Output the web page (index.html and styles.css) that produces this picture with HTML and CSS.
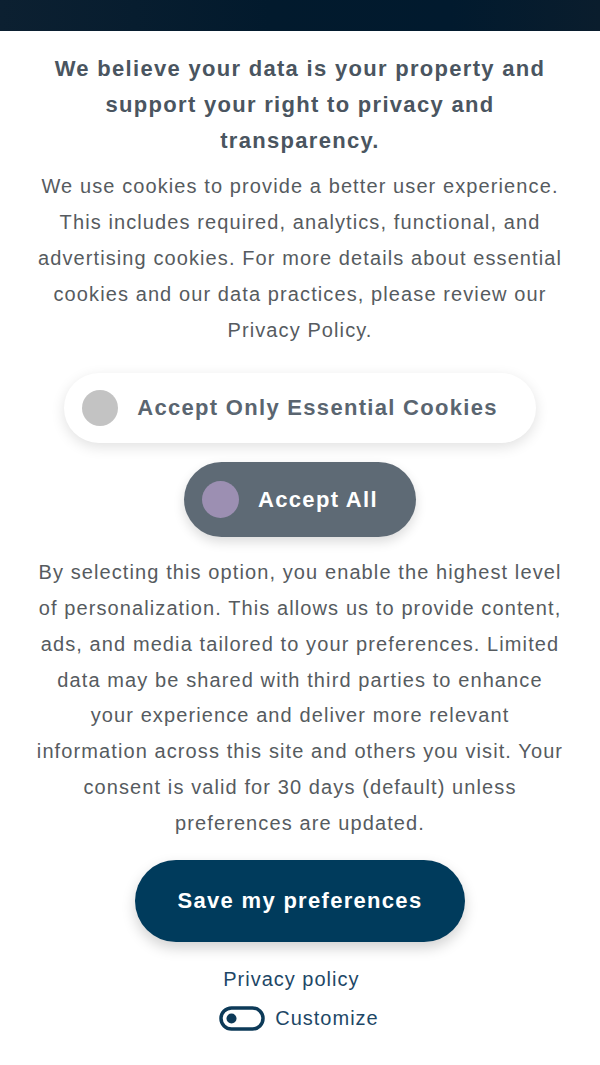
FILE: index.html
```html
<!DOCTYPE html>
<html lang="en">
<head>
<meta charset="utf-8">
<title>Cookie consent</title>
<link rel="stylesheet" href="styles.css">
</head>
<body>
<div class="topbar"></div>
<main class="consent">
  <h1 class="title">We believe your data is your property and support your right to privacy and transparency.</h1>
  <p class="text">We use cookies to provide a better user experience. This includes required, analytics, functional, and advertising cookies. For more details about essential cookies and our data practices, please review our Privacy Policy.</p>
  <div class="options">
    <button class="opt opt-light"><span class="dot dot-gray"></span><span>Accept Only Essential Cookies</span></button>
    <button class="opt opt-dark"><span class="dot dot-purple"></span><span>Accept All</span></button>
  </div>
  <p class="text text-tight">By selecting this option, you enable the highest level of personalization. This allows us to provide content, ads, and media tailored to your preferences. Limited data may be shared with third parties to enhance your experience and deliver more relevant information across this site and others you visit. Your consent is valid for 30 days (default) unless preferences are updated.</p>
  <button class="save">Save my preferences</button>
  <div class="links">
    <a class="link" href="#">Privacy policy</a>
    <a class="customize" href="#">
      <svg width="46" height="25" viewBox="0 0 46 25" aria-hidden="true"><rect x="2" y="2" width="42" height="21" rx="10.5" fill="none" stroke="#0d3a58" stroke-width="3.5"/><circle cx="12.5" cy="12.5" r="5" fill="#0d3a58"/></svg>
      <span>Customize</span>
    </a>
  </div>
</main>
</body>
</html>
```
FILE: styles.css
```css
html, body {
  margin: 0;
  padding: 0;
  background: #ffffff;
}
body {
  font-family: "Liberation Sans", Arial, sans-serif;
}
.topbar {
  height: 31px;
  background: linear-gradient(90deg, #0c2031 0%, #021a2d 45%, #011a2e 75%, #0a1d2d 100%);
}
.consent {
  width: 530px;
  margin: 0 auto;
  display: flex;
  flex-direction: column;
  align-items: center;
  padding-top: 20px;
}
.title {
  margin: 0;
  font-size: 22px;
  line-height: 36px;
  letter-spacing: 1.3px;
  font-weight: 700;
  color: #4a5560;
  text-align: center;
}
.text {
  margin: 9px 0 0;
  font-size: 20px;
  line-height: 36px;
  letter-spacing: 1.1px;
  color: #565b60;
  text-align: center;
}
.text-tight {
  line-height: 35.85px;
}
.options {
  display: flex;
  flex-direction: column;
  align-items: center;
  gap: 19px;
  margin: 25px 0 9px;
}
.opt {
  display: flex;
  align-items: center;
  gap: 19px;
  border: none;
  border-radius: 40px;
  padding: 0 38px 0 18px;
  font-family: inherit;
  font-weight: 700;
  font-size: 22px;
  letter-spacing: 1.3px;
  cursor: pointer;
}
.opt-light {
  height: 70px;
  background: #ffffff;
  color: #5a6570;
  box-shadow: 0 4px 14px rgba(0, 0, 0, 0.12);
}
.opt-dark {
  height: 75px;
  background: #5e6a75;
  color: #ffffff;
  box-shadow: 0 5px 12px rgba(0, 0, 0, 0.14);
}
.dot {
  width: 36px;
  height: 36px;
  border-radius: 50%;
  flex: none;
}
.dot-gray { background: #c3c3c3; }
.dot-purple { width: 37px; height: 37px; background: #9c8fb2; }
.save {
  margin-top: 18px;
  width: 330px;
  height: 82px;
  border: none;
  border-radius: 41px;
  background: #003b5c;
  color: #ffffff;
  font-family: inherit;
  font-weight: 700;
  font-size: 22px;
  letter-spacing: 1.3px;
  box-shadow: 0 6px 14px rgba(0, 0, 0, 0.18);
  cursor: pointer;
}
.links {
  margin-top: 26px;
  display: flex;
  flex-direction: column;
  align-items: flex-start;
  gap: 16px;
}
.link {
  margin-left: 2px;
  font-size: 20px;
  line-height: 22px;
  letter-spacing: 1px;
  color: #1d4766;
  text-decoration: none;
}
.customize {
  display: flex;
  align-items: center;
  gap: 10px;
  font-size: 20px;
  line-height: 24px;
  letter-spacing: 1px;
  color: #1d4766;
  text-decoration: none;
}
.customize svg {
  margin-left: -2px;
}
```
